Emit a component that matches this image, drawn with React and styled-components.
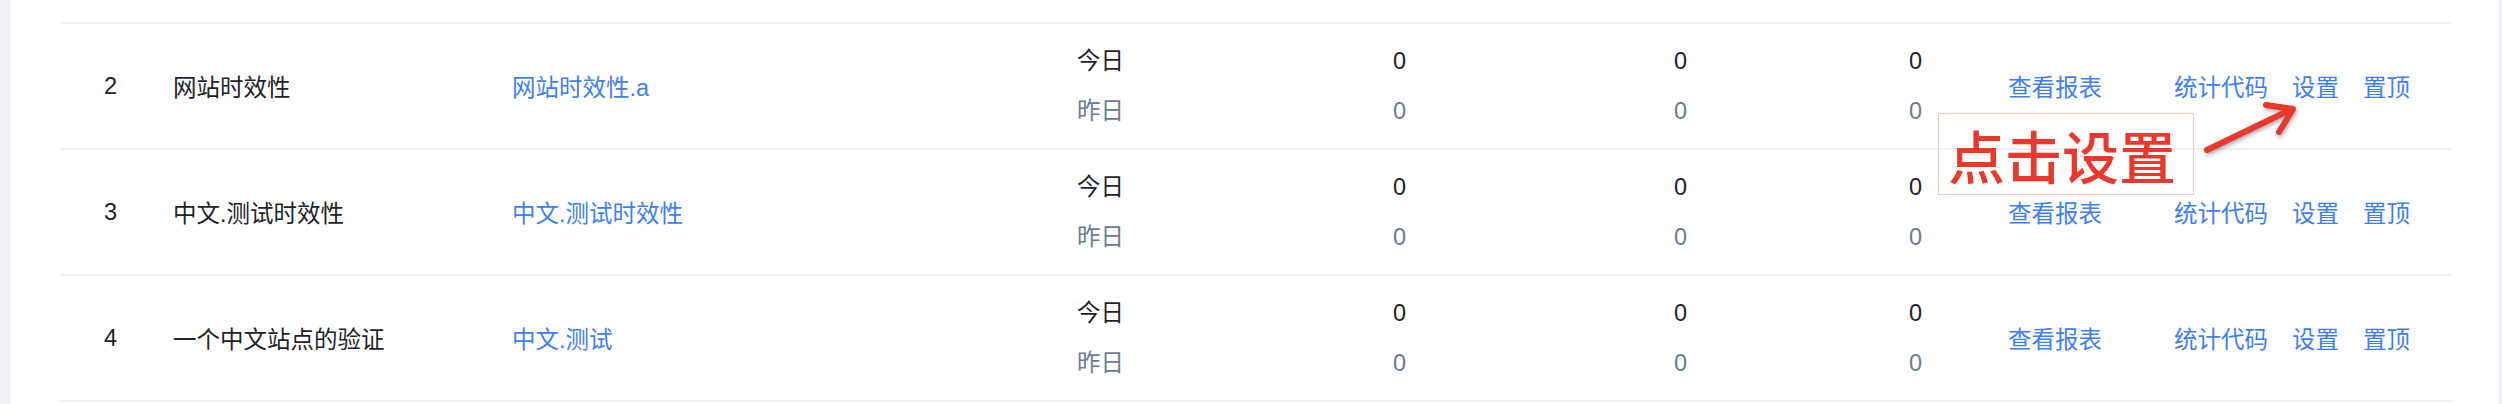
import React from 'react';
import styled, { createGlobalStyle } from 'styled-components';

const GlobalStyle = createGlobalStyle`
  html, body {
    margin: 0;
    padding: 0;
    background: #eef0f4;
  }
  body {
    font-family: "Liberation Sans", "Noto Sans CJK SC", sans-serif;
  }
`;

const Page = styled.div`
  position: relative;
  height: 404px;
  padding: 0 3px 0 11px;
  box-sizing: border-box;
  display: flex;
`;

const Card = styled.div`
  flex: 1;
  background: #ffffff;
  padding: 22px 48px 0 50px;
  overflow: hidden;
`;

const Table = styled.div`
  border-top: 2px solid #eeeff1;
`;

const Row = styled.div`
  display: grid;
  grid-template-columns: 69px 339px 565px 316px 281px 235px 99px 1fr;
  align-items: center;
  height: 124px;
  padding-left: 43px;
  border-bottom: 2px solid #eeeff1;
  font-size: 23.5px;
  color: #1f2329;
`;

const Cell = styled.div`
  white-space: nowrap;
`;

const SiteLink = styled.a`
  color: #3f7ff5;
  text-decoration: none;
  white-space: nowrap;
  cursor: pointer;
`;

const Stat = styled.div`
  display: flex;
  flex-direction: column;
`;

const StatLine = styled.span`
  line-height: 50px;
  color: ${(p) => (p.muted ? '#6c7b95' : '#1f2329')};
`;

const Actions = styled.div`
  display: flex;
  align-items: center;
  gap: 24px;
`;

const ActionLink = styled.a`
  color: #3f7ff5;
  white-space: nowrap;
  cursor: pointer;
  &:first-child {
    margin-right: 48px;
  }
`;

const Callout = styled.div`
  position: absolute;
  left: 1938px;
  top: 113px;
  width: 256px;
  height: 82px;
  box-sizing: border-box;
  border: 1.5px solid #f5c6c2;
  display: flex;
  align-items: center;
  padding-left: 9px;
  font-family: "Noto Sans CJK SC", sans-serif;
  font-size: 57px;
  font-weight: 500;
  line-height: 1;
  color: #e9392d;
  white-space: nowrap;
`;

const ArrowSvg = styled.svg`
  position: absolute;
  left: 2195px;
  top: 95px;
  overflow: visible;
  filter: drop-shadow(1px 2px 2px rgba(0, 0, 0, 0.35));
`;

const sites = [
  { id: 2, name: '网站时效性', domain: '网站时效性.a' },
  { id: 3, name: '中文.测试时效性', domain: '中文.测试时效性' },
  { id: 4, name: '一个中文站点的验证', domain: '中文.测试' },
];

const StatColumn = ({ today, yesterday }) => (
  <Stat>
    <StatLine>{today}</StatLine>
    <StatLine muted>{yesterday}</StatLine>
  </Stat>
);

const SiteRow = ({ site }) => (
  <Row>
    <Cell>{site.id}</Cell>
    <Cell>{site.name}</Cell>
    <Cell>
      <SiteLink>{site.domain}</SiteLink>
    </Cell>
    <StatColumn today="今日" yesterday="昨日" />
    <StatColumn today="0" yesterday="0" />
    <StatColumn today="0" yesterday="0" />
    <StatColumn today="0" yesterday="0" />
    <Actions>
      <ActionLink>查看报表</ActionLink>
      <ActionLink>统计代码</ActionLink>
      <ActionLink>设置</ActionLink>
      <ActionLink>置顶</ActionLink>
    </Actions>
  </Row>
);

const App = () => (
  <>
    <GlobalStyle />
    <Page>
      <Card>
        <Table>
          {sites.map((s) => (
            <SiteRow key={s.id} site={s} />
          ))}
        </Table>
      </Card>
      <Callout>点击设置</Callout>
      <ArrowSvg width="110" height="65" viewBox="0 0 110 65">
        <g
          fill="none"
          stroke="#e9392d"
          strokeWidth="6"
          strokeLinecap="round"
          strokeLinejoin="round"
        >
          <line x1="12" y1="55" x2="97" y2="14" />
          <polyline points="71,10 98,14 84,37" />
        </g>
      </ArrowSvg>
    </Page>
  </>
);

export default App;
